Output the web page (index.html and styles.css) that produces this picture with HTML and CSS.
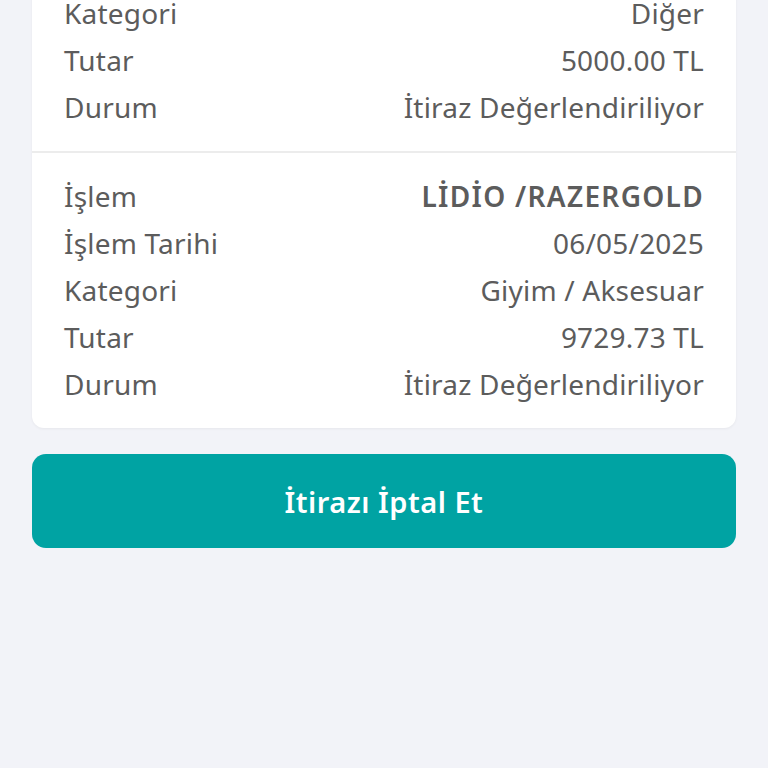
FILE: index.html
```html
<!DOCTYPE html>
<html lang="tr">
<head>
    <meta charset="UTF-8">
    <meta name="viewport" content="width=device-width, initial-scale=1.0">
    <title>İtiraz Detayı</title>
    <link rel="stylesheet" href="styles.css">
</head>
<body>
    <div class="page">
        <div class="card">
            <div class="section">
                <div class="row"><span class="label">Kategori</span><span class="value">Diğer</span></div>
                <div class="row"><span class="label">Tutar</span><span class="value">5000.00 TL</span></div>
                <div class="row"><span class="label">Durum</span><span class="value">İtiraz Değerlendiriliyor</span></div>
            </div>
            <div class="section">
                <div class="row"><span class="label">İşlem</span><span class="value strong">LİDİO /RAZERGOLD</span></div>
                <div class="row"><span class="label">İşlem Tarihi</span><span class="value">06/05/2025</span></div>
                <div class="row"><span class="label">Kategori</span><span class="value">Giyim / Aksesuar</span></div>
                <div class="row"><span class="label">Tutar</span><span class="value">9729.73 TL</span></div>
                <div class="row"><span class="label">Durum</span><span class="value">İtiraz Değerlendiriliyor</span></div>
            </div>
        </div>
        <button class="cancel-btn">İtirazı İptal Et</button>
    </div>
</body>
</html>
```

FILE: styles.css
```css
body {
    margin: 0;
    background-color: #f2f3f8;
    font-family: "Noto Sans", "Open Sans", sans-serif;
    height: 768px;
    overflow: hidden;
}
.page {
    padding: 0 32px;
    margin-top: -30px;
}
.card {
    background-color: #ffffff;
    border-radius: 12px;
    box-shadow: 0 1px 3px rgba(0, 0, 0, 0.05);
}
.section {
    padding: 20px 32px;
}
.section + .section {
    border-top: 2px solid #ececec;
}
.row {
    display: flex;
    justify-content: space-between;
    height: 47px;
    line-height: 47px;
    font-size: 28px;
    letter-spacing: 0.2px;
    color: #5c5c5c;
}
.value.strong {
    font-weight: 600;
    letter-spacing: 1.3px;
}
.cancel-btn {
    display: block;
    width: 100%;
    height: 94px;
    margin-top: 26px;
    border: none;
    border-radius: 14px;
    background-color: #00a3a3;
    color: #ffffff;
    font-family: "Noto Sans", sans-serif;
    font-size: 29px;
    font-weight: 600;
    letter-spacing: 0.5px;
}
```
